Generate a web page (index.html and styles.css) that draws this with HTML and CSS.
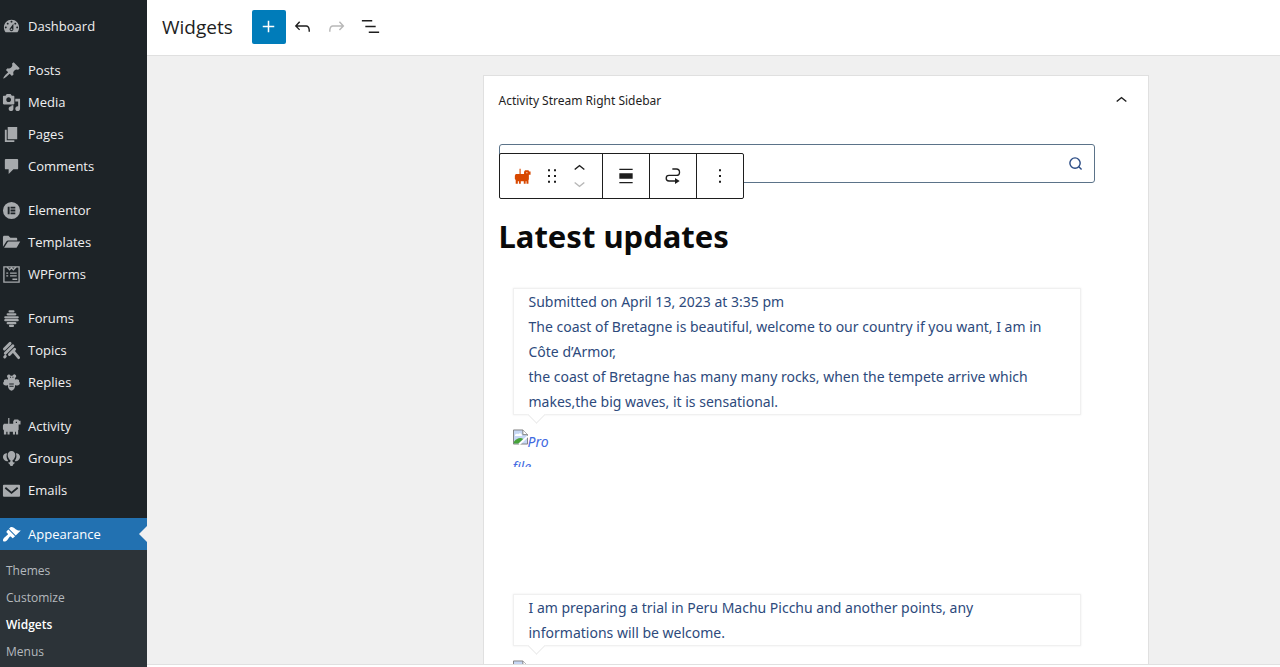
FILE: index.html
```html
<!DOCTYPE html>
<html lang="en">
<head>
<meta charset="UTF-8">
<meta name="viewport" content="width=device-width, initial-scale=1">
<title>Widgets</title>
<link rel="stylesheet" href="styles.css">
</head>
<body>
<nav class="admin-menu" aria-label="Main menu">
  <ul class="menu-group">
    <li><a href="#"><svg viewBox="0 0 20 20"><path d="M3.76 16h12.48c1.1-1.37 1.76-3.11 1.76-5 0-4.42-3.58-8-8-8s-8 3.58-8 8c0 1.89.66 3.63 1.76 5zM10 4c.55 0 1 .45 1 1s-.45 1-1 1-1-.45-1-1 .45-1 1-1zM6 6c.55 0 1 .45 1 1s-.45 1-1 1-1-.45-1-1 .45-1 1-1zm8 0c.55 0 1 .45 1 1s-.45 1-1 1-1-.45-1-1 .45-1 1-1zm-5.37 5.55L12 7v6c0 1.1-.9 2-2 2s-2-.9-2-2c0-.57.24-1.08.63-1.45zM4 10c.55 0 1 .45 1 1s-.45 1-1 1-1-.45-1-1 .45-1 1-1zm12 0c.55 0 1 .45 1 1s-.45 1-1 1-1-.45-1-1 .45-1 1-1zm-5 3c0-.55-.45-1-1-1s-1 .45-1 1 .45 1 1 1 1-.45 1-1z"/></svg>Dashboard</a></li>
  </ul>
  <ul class="menu-group">
    <li><a href="#"><svg viewBox="0 0 20 20"><path d="M10.44 3.02l1.82-1.82 6.36 6.35-1.83 1.82c-1.05-.68-2.48-.57-3.41.36l-.75.75c-.92.93-1.04 2.35-.35 3.41l-1.83 1.82-2.41-2.41-2.8 2.79c-.42.42-3.38 2.71-3.8 2.29s1.86-3.39 2.28-3.81l2.79-2.79L4.1 9.36l1.83-1.82c1.05.69 2.48.57 3.4-.36l.75-.75c.93-.92 1.05-2.35.36-3.41z"/></svg>Posts</a></li>
    <li><a href="#"><svg viewBox="0 0 20 20"><path d="M13 11V4c0-.55-.45-1-1-1h-1.67L9 1H5L3.67 3H2c-.55 0-1 .45-1 1v7c0 .55.45 1 1 1h10c.55 0 1-.45 1-1zM7 4.5c1.38 0 2.5 1.12 2.5 2.5S8.38 9.5 7 9.5 4.5 8.38 4.5 7 5.62 4.5 7 4.5zM14 6h5v10.5c0 1.38-1.12 2.5-2.5 2.5S14 17.88 14 16.5s1.12-2.5 2.5-2.5c.17 0 .34.02.5.05V9h-3V6zm-4 8.05V13h2v3.5c0 1.38-1.12 2.5-2.5 2.5S7 17.88 7 16.5 8.12 14 9.5 14c.17 0 .34.02.5.05z"/></svg>Media</a></li>
    <li><a href="#"><svg viewBox="0 0 20 20"><path d="M6 15V2h10v13H6zm-1 1h8v2H3V5h2v11z"/></svg>Pages</a></li>
    <li><a href="#"><svg viewBox="0 0 20 20"><path d="M4 2h12c.6 0 1 .4 1 1v9c0 .6-.4 1-1 1h-4l-5 5v-5H4c-.6 0-1-.4-1-1V3c0-.6.4-1 1-1z"/></svg>Comments</a></li>
  </ul>
  <ul class="menu-group">
    <li><a href="#"><svg viewBox="0 0 20 20"><path fill-rule="evenodd" d="M10 1a9 9 0 1 0 0 18 9 9 0 0 0 0-18zM6 6h2v8H6zM9 6h5v2H9zM9 9h5v2H9zM9 12h5v2H9z"/></svg>Elementor</a></li>
    <li><a href="#"><svg viewBox="0 0 20 20"><path d="M1 14.500V4.500C1 3.700 1.500 3 2.400 3h4.400l2 2h6c.7 0 1.200.5 1.200 1.200V8H6.500C5.700 8 5 8.400 4.600 9zM2.200 15.500l3.600-5.800c.2-.4.600-.7 1.100-.7h12.300l-3.500 5.900c-.3.400-.7.600-1.100.6z"/></svg>Templates</a></li>
    <li><a href="#"><svg viewBox="0 0 20 20"><path class="line" d="M2 2h16v16H2zM5 2l3 3 2-2 2 2 3-3M4.500 8.500h2M8.500 8.500h7M4.500 11.500h2M8.500 11.500h7M11 15h5"/></svg>WPForms</a></li>
  </ul>
  <ul class="menu-group">
    <li><a href="#"><svg viewBox="0 0 20 20"><path class="hive" d="M8 2.500h4M6 5.600h8M3.500 8.700h13M3.500 11.800h13M6 14.900h8M8.500 17.800h3"/></svg>Forums</a></li>
    <li><a href="#"><svg viewBox="0 0 20 20"><path class="sting" d="M2.500 8.500l6-6M3.500 13l8-8M7.800 14.300l5.500-5.500M2.800 16.800l.7-.7M12 11l5.500 6.500"/></svg>Topics</a></li>
    <li><a href="#"><svg viewBox="0 0 20 20"><path fill-rule="evenodd" d="M7 1.500a2 2 0 0 1 2 1.300h2a2 2 0 1 1 2.500 2.500c.3.500.5 1 .4 1.700 2.700-1.400 4.700.1 4 2.300.9.300 1.300 2.200.2 3.100-1.200 1-3 .8-4.300.1.200 2.700-1.100 5.300-3.800 6.300-2.700-1-4-3.600-3.800-6.300-1.300.7-3.100.9-4.300-.1-1.100-.9-.7-2.800.2-3.100-.7-2.200 1.300-3.700 4-2.300-.1-.7.100-1.200.4-1.700A2 2 0 0 1 7 1.500zM8.500 4v1h1V4zM11 4v1h1V4zM7.600 11v1h4.800v-1zM7.800 13.500v1h4.400v-1z"/></svg>Replies</a></li>
  </ul>
  <ul class="menu-group">
    <li><a href="#"><svg viewBox="0 0 20 20"><use href="#buddy"/></svg>Activity</a></li>
    <li><a href="#"><svg viewBox="0 0 20 20"><path d="M5.500 4.500C3 4.300 1 6 1 8.500c0 2 1.500 3.600 3.500 4.500l.5-.5.500.7 1-1C4.600 10 4.300 7 5.500 4.500zM14.500 4.500C17 4.300 19 6 19 8.500c0 2-1.500 3.600-3.500 4.500l-.5-.5-.5.700-1-1c1.900-2.200 2.200-5.200 1-7.700z"/><path d="M10 2c2.400 0 4 1.800 4 4.200 0 2.500-1.500 4.700-3.200 6.200l1 1.600 2 .500-1.800 1.500-1 2h-2l-1-2-1.800-1.500 2-.5 1-1.600C7.500 10.900 6 8.700 6 6.200 6 3.800 7.600 2 10 2z"/></svg>Groups</a></li>
    <li><a href="#"><svg viewBox="0 0 20 20"><path d="M2 4h16c.6 0 1 .4 1 1v10.500c0 .6-.4 1-1 1H2c-.6 0-1-.4-1-1V5c0-.6.4-1 1-1z"/><path class="flap" d="M3.500 7l6.500 5.500L16.500 7"/></svg>Emails</a></li>
  </ul>
  <ul class="menu-group">
    <li class="current"><a href="#"><svg viewBox="0 0 20 20"><path d="M14.480 11.060L7.410 3.990l1.500-1.500c.5-.56 2.300-.47 3.510.32 1.210.8 1.430 1.280 2.910 2.100 1.180.64 2.450 1.260 4.450.85zm-.71.71L6.700 4.700 4.930 6.470c-.39.39-.39 1.020 0 1.410l1.060 1.060c.39.39.39 1.030 0 1.420-.6.6-1.430 1.110-2.210 1.690-.35.26-.7.53-1.010.84C1.430 14.230.4 16.080 1.400 17.070c.99 1 2.840-.03 4.180-1.360.31-.31.58-.66.85-1.020.57-.78 1.080-1.610 1.690-2.210.39-.39 1.020-.39 1.410 0l1.060 1.060c.39.39 1.020.39 1.410 0z"/></svg>Appearance</a></li>
  </ul>
  <ul class="submenu">
    <li><a href="#">Themes</a></li>
    <li><a href="#">Customize</a></li>
    <li><a href="#" class="active">Widgets</a></li>
    <li><a href="#">Menus</a></li>
  </ul>
</nav>

<div class="editor">
  <header class="editor-header">
    <h1>Widgets</h1>
    <div class="header-tools">
      <button class="inserter" aria-label="Add block"><svg viewBox="0 0 24 24"><path d="M18 11.200h-5.200V6h-1.600v5.200H6v1.600h5.200V18h1.600v-5.200H18z"/></svg></button>
      <button aria-label="Undo"><svg viewBox="0 0 24 24"><path d="M18.300 11.700c-.6-.6-1.400-.9-2.300-.9H6.700l2.900-3.300-1.100-1-4.500 5L8.500 16l1-1-2.700-2.700H16c.5 0 .9.2 1.300.5 1 1 1 3.400 1 4.500v.3h1.500v-.2c0-1.500 0-4.300-1.500-5.700z"/></svg></button>
      <button aria-label="Redo" disabled><svg viewBox="0 0 24 24"><path d="M15.600 6.500l-1.100 1 2.900 3.300H8c-.9 0-1.700.3-2.300.9-1.400 1.500-1.400 4.200-1.400 5.600v.2h1.500v-.3c0-1.100 0-3.500 1-4.500.3-.3.700-.5 1.300-.5h9.200L14.500 15l1.100 1.100 4.600-4.600-4.600-5z"/></svg></button>
      <button aria-label="List View"><svg viewBox="0 0 24 24"><path d="M13.800 5.200H3v1.500h10.800V5.200zm-3.600 12v1.500H21v-1.500H10.200zm7.200-6H6.600v1.500h10.800v-1.500z"/></svg></button>
    </div>
  </header>

  <main class="canvas">
    <section class="widget-area">
      <h2><button class="area-toggle" aria-expanded="true">Activity Stream Right Sidebar<svg viewBox="0 0 24 24"><path d="M6.500 12.400L12 8l5.500 4.400-.9 1.200L12 10l-4.500 3.600-1-1.200z"/></svg></button></h2>

      <div class="area-body">
        <div class="search">
          <input type="search" aria-label="Search">
          <button aria-label="Search"><svg viewBox="0 0 16 16"><circle cx="7.500" cy="7.500" r="5.500"/><path d="M11.500 11.500l3 3"/></svg></button>
          <div class="block-toolbar" role="toolbar" aria-label="Block tools">
            <div class="tool-group">
              <button class="block-type" aria-label="Latest Activities"><svg viewBox="0 0 20 20"><path id="buddy" d="M6.500 1h1.300v6h4V4.500l1.200-2h4l1 1.500h1.500v4H17.500v5.500l-.5.500V18.500h-2.300v-3h-1v3h-2.200v-3H8v3H5.800v-3H4.500v3H2V14L1 13V9l1-2h4.500zM14.500 5v1.300h1.300V5z"/></svg></button>
              <button class="drag" aria-label="Drag"><svg viewBox="0 0 24 24"><path d="M6 5h3V2H6v3zm0 8.500h3v-3H6v3zm0 8.500h3v-3H6v3zm9-20v3h3V2h-3zm0 11.500h3v-3h-3v3zm0 8.500h3v-3h-3v3z"/></svg></button>
              <div class="movers">
                <button aria-label="Move up"><svg viewBox="0 0 24 24"><path d="M6.500 12.400L12 8l5.500 4.400-.9 1.200L12 10l-4.500 3.600-1-1.200z"/></svg></button>
                <button aria-label="Move down" disabled><svg viewBox="0 0 24 24"><path d="M17.500 11.600L12 16l-5.500-4.400.9-1.200L12 14l4.500-3.600 1 1.200z"/></svg></button>
              </div>
            </div>
            <div class="tool-group">
              <button class="tool" aria-label="Align"><svg viewBox="0 0 24 24"><path d="M2 1h20v2H2zM2 8h20v8H2zM2 21h20v2H2z"/></svg></button>
            </div>
            <div class="tool-group">
              <button class="tool" aria-label="Move to widget area"><svg viewBox="0 0 24 24"><path class="stroke" d="M11 1.500h6a4.800 4.800 0 0 1 0 9.600H6a4.200 4.200 0 0 0 0 8.400H17"/><path d="M15 15l7 4.500-7 4.500z"/></svg></button>
            </div>
            <div class="tool-group">
              <button class="tool" aria-label="Options"><svg viewBox="0 0 24 24"><path d="M13.500 22h-3v-3h3v3zm0-8.500h-3v-3h3v3zm0-8.500h-3V2h3v3z"/></svg></button>
            </div>
          </div>
        </div>

        <h3>Latest updates</h3>

        <div class="activity-list">
          <article class="activity">
            <div class="bubble">
              <p>Submitted on April 13, 2023 at 3:35 pm<br>The coast of Bretagne is beautiful, welcome to our country if you want, I am in Côte d’Armor,</p>
              <p>the coast of Bretagne has many many rocks, when the tempete arrive which makes,the big waves, it is sensational.</p>
            </div>
            <a href="#" class="avatar"><svg viewBox="0 0 16 16"><use href="#broken"/></svg>Profile</a>
          </article>
          <article class="activity">
            <div class="bubble">
              <p>I am preparing a trial in Peru Machu Picchu and another points, any informations will be welcome.</p>
            </div>
            <a href="#" class="avatar"><svg viewBox="0 0 16 16"><g id="broken"><path fill="#c6d7f4" stroke="#7d7d7d" d="M.5.5h10l5 5v10H.5z"/><path fill="#fff" d="M2 7c0-2 2-3 3.500-2C7 3 10 4 9.500 7z"/><path fill="#48a33a" d="M1 15v-2c3-4 7-5 10-3l-5 5z"/><path fill="#fff" stroke="#7d7d7d" d="M10.500.5v5h5"/><path stroke="#fff" stroke-width="2" d="M6.500 16L16 7"/></g></svg>Profile</a>
          </article>
        </div>
      </div>
    </section>
  </main>
  <footer class="editor-footer"></footer>
</div>
</body>
</html>
```

FILE: styles.css
```css
* {
  box-sizing: border-box;
}
body {
  margin: 0;
  height: 100vh;
  display: flex;
  overflow: hidden;
  font-family: "Open Sans", "Noto Sans", sans-serif;
  font-size: 13px;
  color: #1e1e1e;
  background: #fff;
}
ul {
  list-style: none;
  margin: 0;
  padding: 0;
}
a {
  text-decoration: none;
}
button {
  display: flex;
  align-items: center;
  justify-content: center;
  margin: 0;
  padding: 0;
  border: none;
  background: none;
  color: inherit;
  font: inherit;
  cursor: pointer;
}
svg {
  display: block;
  flex-shrink: 0;
  fill: currentColor;
}

/* left menu */
.admin-menu {
  width: 147px;
  flex-shrink: 0;
  padding-top: 10px;
  background: #1d2327;
  overflow: hidden;
}
.menu-group + .menu-group {
  margin-top: 12px;
}
.menu-group a {
  display: flex;
  align-items: center;
  gap: 7px;
  height: 32px;
  padding-left: 2px;
  color: #f0f0f1;
}
.menu-group svg {
  width: 19px;
  height: 19px;
  color: #a7aaad;
}
.line,
.hive,
.sting,
.flap {
  fill: none;
  stroke: currentColor;
}
.line {
  stroke-width: 1.4;
}
.hive {
  stroke-width: 2.4;
  stroke-linecap: round;
}
.sting {
  stroke-width: 3;
  stroke-linecap: round;
}
.flap {
  stroke: #1d2327;
  stroke-width: 2;
}
.current {
  position: relative;
  background: #2271b1;
}
.current::after {
  content: "";
  position: absolute;
  right: 0;
  top: 8px;
  border: 8px solid transparent;
  border-left-width: 0;
  border-right-color: #f0f0f1;
}
.menu-group .current a,
.menu-group .current svg {
  color: #fff;
}
.submenu {
  height: 100%;
  padding-top: 7px;
  background: #2c3338;
}
.submenu a {
  display: block;
  padding-left: 6px;
  font-size: 12px;
  line-height: 27px;
  color: #b4b9be;
}
.submenu .active {
  color: #fff;
  font-weight: 600;
}

/* top bar */
.editor {
  flex: 1;
  min-width: 0;
  display: flex;
  flex-direction: column;
}
.editor-header {
  display: flex;
  align-items: center;
  gap: 19px;
  height: 56px;
  flex-shrink: 0;
  padding: 0 15px 2px;
  border-bottom: 1px solid #e0e0e0;
}
.editor-header h1 {
  margin: 0;
  font-size: 19px;
  font-weight: 400;
}
.header-tools {
  display: flex;
}
.header-tools button {
  width: 34px;
  height: 34px;
}
.header-tools svg {
  width: 23px;
  height: 23px;
}
.header-tools .inserter {
  background: #007cba;
  border-radius: 2px;
  color: #fff;
}
button:disabled {
  color: #b8b8b8;
}

/* canvas */
.canvas {
  flex: 1;
  min-height: 0;
  overflow: hidden;
  padding: 19px 0 0 204px;
  background: #f0f0f0;
}
.widget-area {
  max-width: 666px;
  min-height: 100%;
  margin: 0 auto;
  background: #fff;
  border: 1px solid #e0e0e0;
}
.widget-area h2 {
  margin: 0;
  font-family: "Noto Sans", sans-serif;
  font-size: 12px;
  font-weight: 400;
}
.area-toggle {
  justify-content: space-between;
  width: 100%;
  height: 48px;
  padding: 0 15px;
}
.area-toggle svg {
  width: 23px;
  height: 23px;
}
.area-body {
  padding: 20px 53px 0 15px;
}
.search {
  position: relative;
  display: flex;
  height: 39px;
  border: 1px solid #5b7389;
  border-radius: 3px;
}
.search input {
  flex: 1;
  min-width: 0;
  border: none;
  background: none;
}
.search > button {
  width: 37px;
  color: #2b4c85;
}
.search > button svg {
  width: 15px;
  height: 15px;
  fill: none;
  stroke: currentColor;
  stroke-width: 1.5;
}
.block-toolbar {
  position: absolute;
  left: -1px;
  top: 8px;
  display: flex;
  height: 46px;
  background: #fff;
  border: 1px solid #1e1e1e;
  border-radius: 2px;
}
.tool-group {
  display: flex;
  align-items: center;
}
.tool-group + .tool-group {
  border-left: 1px solid #1e1e1e;
}
.block-toolbar button {
  height: 44px;
}
.movers svg {
  width: 23px;
  height: 23px;
}
.tool {
  width: 46px;
}
.block-type {
  width: 46px;
  color: #d84800;
}
.block-type svg {
  width: 17px;
  height: 17px;
}
.drag {
  width: 12px;
}
.drag svg,
.tool svg {
  width: 16px;
  height: 16px;
}
.movers {
  width: 44px;
}
.block-toolbar .movers button {
  width: 100%;
  height: 15px;
}
.stroke {
  fill: none;
  stroke: currentColor;
  stroke-width: 2;
}
.area-body h3 {
  margin: 30px 0 29px;
  font-family: "Noto Sans", sans-serif;
  font-size: 31px;
  font-weight: 700;
  line-height: 46px;
  color: #0a0a0a;
}

/* activity stream */
.activity-list {
  padding: 0 14px;
  font-family: "Noto Sans", sans-serif;
  font-size: 14px;
  line-height: 25px;
}
.activity {
  height: 306px;
}
.bubble {
  position: relative;
  padding: 0 30px 0 15px;
  border: 1px solid #f0f0f0;
  box-shadow: 0 0 2px #ececec;
  color: #2d4a7c;
}
.bubble::after {
  content: "";
  position: absolute;
  left: 16px;
  bottom: -7px;
  width: 12px;
  height: 12px;
  background: #fff;
  border: solid #ececec;
  border-width: 0 1px 1px 0;
  transform: rotate(45deg);
}
.bubble p {
  margin: 0;
}
.avatar {
  display: block;
  width: 38px;
  height: 38px;
  margin-top: 14px;
  overflow: hidden;
  font-style: italic;
  color: #4169e1;
  word-break: break-all;
}
.avatar svg {
  float: left;
  width: 15px;
  height: 16px;
  fill: none;
}
.editor-footer {
  height: 3px;
  flex-shrink: 0;
  border-top: 1px solid #e0e0e0;
}
```
